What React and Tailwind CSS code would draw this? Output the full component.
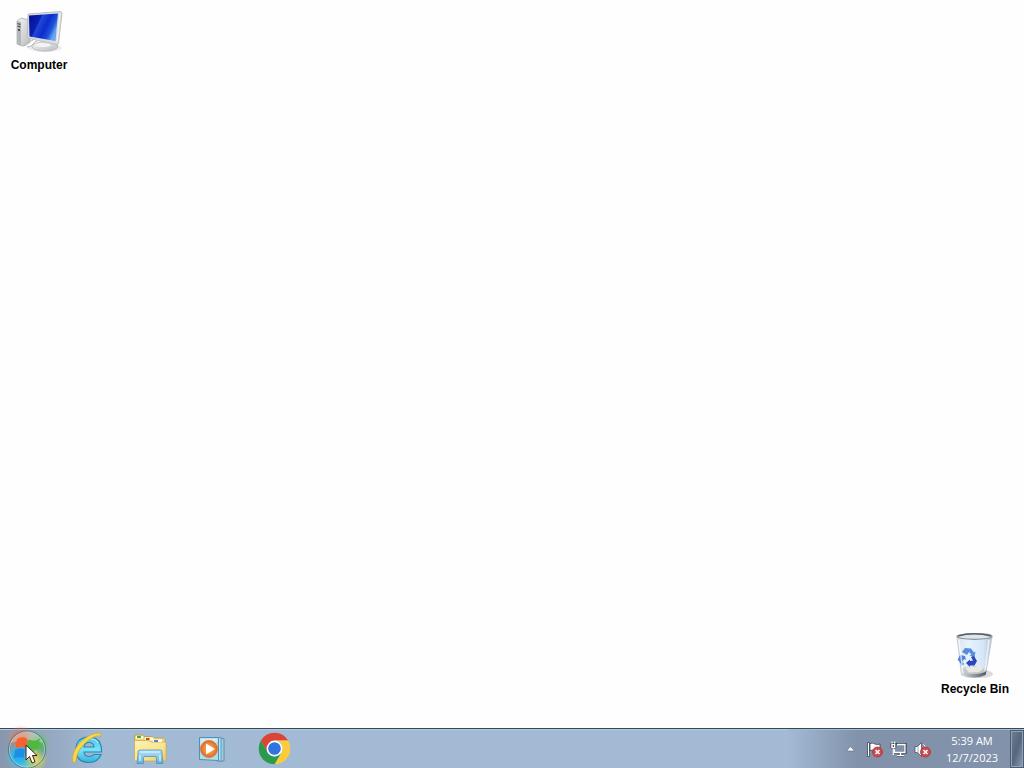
import React from "react";

function ComputerIcon() {
  return (
    <svg width="48" height="44" viewBox="0 0 48 44" aria-hidden="true">
      <defs>
        <linearGradient id="screen" x1="0" y1="0" x2="1" y2="0.45">
          <stop offset="0" stopColor="#060f8c" />
          <stop offset="0.38" stopColor="#0a1fb4" />
          <stop offset="0.42" stopColor="#2348d8" />
          <stop offset="0.65" stopColor="#0c2ccc" />
          <stop offset="0.85" stopColor="#1d50dc" />
          <stop offset="1" stopColor="#6aa4f0" />
        </linearGradient>
        <linearGradient id="metal" x1="0" y1="0" x2="1" y2="1">
          <stop offset="0" stopColor="#f5f5f5" />
          <stop offset="1" stopColor="#b9bcbd" />
        </linearGradient>
      </defs>
      <ellipse cx="30" cy="38" rx="17" ry="4" fill="#e2e2e2" opacity="0.6" />
      <path d="M2 11 6 8l9 2v22l-8 4-5-2Z" fill="url(#metal)" stroke="#b0b3b4" strokeWidth="0.8" />
      <path d="m2 11 4 1v24l-4-2Z" fill="#b4b7b8" />
      <path d="M2.500 13.500l3 1M2.500 16l3 1" stroke="#484d52" strokeWidth="1.200" />
      <circle cx="4" cy="20" r="1.100" fill="#303a44" />
      <path d="M8 36c6-1 6-5 10-6M12 37c6 0 6-5 10-6" fill="none" stroke="#a0a0a0" strokeWidth="0.8" />
      <path d="m27 29 9 2-1 6-7-1Z" fill="#b6bbbe" />
      <ellipse cx="30" cy="36.500" rx="13" ry="4.700" fill="url(#metal)" stroke="#b4b8ba" strokeWidth="0.800" />
      <ellipse cx="28" cy="35" rx="8" ry="2" fill="#f1f3f4" />
      <path d="m13 4 32-2.500q2 0 2 2L43.500 33q-.3 2-2 1.500L14 28.500q-1.500 0-1.500-2Z" fill="#dadddf" stroke="#b0b5b8" strokeWidth="0.8" />
      <path d="m14 5.500 29-2L40.500 31 14.500 26.500Z" fill="url(#screen)" />
      <path d="m45 3.500-3 29" stroke="#f6f6f6" />
    </svg>
  );
}

function RecycleBinIcon() {
  return (
    <svg width="42" height="48" viewBox="0 0 42 48" aria-hidden="true">
      <defs>
        <linearGradient id="bin">
          <stop offset="0" stopColor="#dbe3ea" />
          <stop offset="0.35" stopColor="#e6f3ff" />
          <stop offset="0.75" stopColor="#d4e6f7" />
          <stop offset="1" stopColor="#b6c3d0" />
        </linearGradient>
        <linearGradient id="binBase">
          <stop offset="0" stopColor="#d9dedf" />
          <stop offset="0.5" stopColor="#939b9e" />
          <stop offset="1" stopColor="#52595d" />
        </linearGradient>
      </defs>
      <ellipse cx="28" cy="42" rx="11" ry="4" fill="#dcdcdc" />
      <path d="m3 5 4.500 38q13 5 24 0L38 5Z" fill="url(#bin)" stroke="#bcc4cb" strokeWidth="0.8" />
      <path d="m7 38 .6 5q12 5 24 0l.9-5q-11 4-25.500 0Z" fill="url(#binBase)" />
      <ellipse cx="20" cy="38" rx="12.500" ry="4" fill="#c2c8cb" />
      <path d="m11 36 5-2 5 1 4-2 5 3-5 4-10 .5Z" fill="#e8e9e4" />
      <ellipse cx="20.500" cy="4.500" rx="17.500" ry="2.800" fill="#dfe6eb" stroke="#8b939b" strokeWidth="1.200" />
      <path d="M4 4q16-4.500 33 0" fill="none" stroke="#59626d" strokeWidth="1.300" />
      <g transform="translate(-1 0)">
        <path d="m9 20 3-4 6 .5 3 4 1.500-1-1 6-5-2 2-1-2.500-2.500-2 3Z" fill="#5b8cdc" />
        <path d="m7 23 5 1 1 4-1.500-1L9 29.500l2 2.500-2 2-3-5-1.500-1Z" fill="#4d83d8" />
        <path d="m18 25 3-1 3 5-2.500 4.500H17V35l-4-4 4-3.500V29l3-.5Z" fill="#2b46b8" />
      </g>
      <path d="m5 8 4 33M35 8l-4 31" stroke="#fff" strokeWidth="1.500" opacity="0.7" />
    </svg>
  );
}

function StartIcon() {
  return (
    <svg width="40" height="39" viewBox="0 0 40 39" className="overflow-visible" aria-hidden="true">
      <defs>
        <linearGradient id="orb" x1="0" y1="0" x2="0" y2="1">
          <stop offset="0" stopColor="#a3adb0" />
          <stop offset="0.45" stopColor="#6f8d92" />
          <stop offset="0.75" stopColor="#4fa3b4" />
          <stop offset="1" stopColor="#6fd0d8" />
        </linearGradient>
        <radialGradient id="glowRed">
          <stop offset="0" stopColor="#ff5a30" />
          <stop offset="0.45" stopColor="#f06848" stopOpacity="0.8" />
          <stop offset="1" stopColor="#e88870" stopOpacity="0" />
        </radialGradient>
        <radialGradient id="glowGreen">
          <stop offset="0" stopColor="#3fc040" />
          <stop offset="0.5" stopColor="#5cc064" stopOpacity="0.8" />
          <stop offset="1" stopColor="#7cc490" stopOpacity="0" />
        </radialGradient>
        <radialGradient id="glowBlue">
          <stop offset="0" stopColor="#18a4f4" />
          <stop offset="0.5" stopColor="#30b8f0" stopOpacity="0.85" />
          <stop offset="1" stopColor="#60c8e8" stopOpacity="0" />
        </radialGradient>
        <radialGradient id="glowYellow">
          <stop offset="0" stopColor="#f4d860" />
          <stop offset="0.5" stopColor="#c8cc60" stopOpacity="0.75" />
          <stop offset="1" stopColor="#b0c880" stopOpacity="0" />
        </radialGradient>
      </defs>
      <circle cx="20" cy="19.500" r="18.500" fill="url(#orb)" />
      <circle cx="14" cy="10" r="15" fill="url(#glowRed)" opacity="0.75" />
      <circle cx="31" cy="14" r="13" fill="url(#glowGreen)" opacity="0.85" />
      <circle cx="12" cy="26" r="14" fill="url(#glowBlue)" />
      <circle cx="29" cy="30" r="12" fill="url(#glowYellow)" />
      <path d="M4 13C8 0 31-2 36 13q-16-6-32 0Z" fill="#e6e4d8" opacity="0.4" />
      <path d="M10 9q5-3 10-.5L18.500 18q-5-2.500-10 .5Z" fill="#f8602c" />
      <path d="M21.500 9.500q6 3.500 12-1.500-2 4-3 10-5 3-10.500 0Z" fill="#50b83c" />
      <path d="M8 20q5-3 10-.5L16.500 28q-5-2-9.500.5Z" fill="#1c8ee4" />
      <path d="M19.500 20.500q5 3 10.500 0l-2 9q-5 2-10-1Z" fill="#ecc850" />
      <circle cx="20" cy="19.500" r="18.500" fill="none" stroke="#4e6c76" strokeWidth="0.8" />
      <circle cx="20" cy="19.500" r="17.600" fill="none" stroke="#cfe4de" strokeWidth="0.8" opacity="0.7" />
    </svg>
  );
}

function ExplorerEIcon() {
  return (
    <svg width="34" height="34" viewBox="0 0 34 34" aria-hidden="true">
      <defs>
        <linearGradient id="eBlue" x1="0" y1="0" x2="0" y2="1">
          <stop offset="0" stopColor="#4fbfe6" />
          <stop offset="0.5" stopColor="#7ce2f6" />
          <stop offset="1" stopColor="#35aedb" />
        </linearGradient>
      </defs>
      <path d="M30.500 20H13q.5 4.500 5 4.500 3.500 0 5-2h7q-3 8-12 8-13 0-13-13 0-12 13-12.500 13 0 12.500 15ZM13 15h10q-.5-4.500-5-4.500T13 15Z" fill="url(#eBlue)" stroke="#2489b4" strokeWidth="1.200" fillRule="evenodd" />
      <path d="M8 14q3-7 11-7 6 0 8 4" fill="none" stroke="#a8ecf8" strokeWidth="1.200" />
      <path d="M2 30C-1 18 14 2 27 1q4 0 2.500 4-1-2-4-1C16 7 7 17 5.500 26q-.5 2-1 4-1.500 1.500-2.500 0Z" fill="#f6d84a" stroke="#cfa42c" strokeWidth="0.700" />
    </svg>
  );
}

function FolderIcon() {
  return (
    <svg width="34" height="32" viewBox="0 0 34 32" aria-hidden="true">
      <defs>
        <linearGradient id="folder" x1="0" y1="0" x2="1" y2="1">
          <stop offset="0" stopColor="#fff3b4" />
          <stop offset="0.6" stopColor="#f7e490" />
          <stop offset="1" stopColor="#ecca62" />
        </linearGradient>
        <linearGradient id="stand" x1="0" y1="0" x2="0" y2="1">
          <stop offset="0" stopColor="#b4e0f4" />
          <stop offset="0.5" stopColor="#8ccaec" />
          <stop offset="1" stopColor="#62aedc" />
        </linearGradient>
      </defs>
      <path d="M1.500 4q0-2 2-2h6l1.500 1.500h9L21.500 5H31q1 0 1 1v21H1.500Z" fill="#f0d880" stroke="#c09c44" strokeWidth="0.8" />
      <path d="M3 3h7v2.500H3ZM12 4.500h8v3h-8Z" fill="#fffdf0" />
      <path d="M4 3h4v2H4Z" fill="#46ac38" />
      <path d="M13 5h3.500v2H13Z" fill="#c44a2c" />
      <path d="M1.500 7.500H15l3.500 1.500H32q1 0 1 1v17q0 1-1 1H2.500q-1 0-1-1Z" fill="url(#folder)" stroke="#ceac54" strokeWidth="0.8" />
      <path d="M20 6.500h9V9h-9Z" fill="#fff" />
      <path d="M21 7h4v2h-4Z" fill="#4c88c8" />
      <path d="M5 19q0-2 2-2h20q2 0 2 2v2l1 9.500h-6.500V25q0-1.500-1.500-1.500H12q-1.500 0-1.500 1.500v5.500H4L5 21Z" fill="url(#stand)" stroke="#4c94bc" strokeWidth="0.8" />
      <path d="M7 19h20M7 22v6M27 22v6" fill="none" stroke="#e2f8ff" strokeWidth="1.200" />
    </svg>
  );
}

function MediaIcon() {
  return (
    <svg width="28" height="28" viewBox="0 0 28 28" aria-hidden="true">
      <defs>
        <radialGradient id="play">
          <stop offset="0" stopColor="#ffb45c" />
          <stop offset="0.65" stopColor="#f0863a" />
          <stop offset="1" stopColor="#de6a24" />
        </radialGradient>
      </defs>
      <path d="M20 3.500h6V26h-6Z" fill="#9ecbe0" stroke="#4a8cac" strokeWidth="0.8" />
      <path d="M19 2.500h4V26h-4Z" fill="#bfe0ee" stroke="#4a8cac" strokeWidth="0.8" />
      <path d="M1.500 2.500h19v23l-19-1Z" fill="#b4daea" stroke="#4a93b2" />
      <path d="M2.500 3.500h17v3l-17 9Z" fill="#d6ecf4" />
      <circle cx="11" cy="14" r="8.500" fill="url(#play)" stroke="#cc6c2c" strokeWidth="0.7" />
      <path d="m8 8.500 9 5.500-9 5.500Z" fill="#fff" />
    </svg>
  );
}

function ChromeIcon() {
  return (
    <svg width="33" height="33" viewBox="0 0 48 48" aria-hidden="true">
      <path d="M24 1A23 23 0 0 1 43.900 12.500H24L14 29.800 4.100 12.500A23 23 0 0 1 24 1Z" fill="#dc4437" />
      <path d="M43.900 12.500A23 23 0 0 1 24 47l10-17.200a11.500 11.500 0 0 0-10-17.300Z" fill="#fbcb3c" />
      <path d="M24 47A23 23 0 0 1 4.100 12.500L14 29.800A11.500 11.500 0 0 0 34 29.800Z" fill="#2a9a4e" />
      <circle cx="24" cy="24" r="11.500" fill="#fff" />
      <circle cx="24" cy="24" r="9.200" fill="#2f74e0" />
    </svg>
  );
}

function ErrorBadge() {
  return (
    <g>
      <circle cx="11.500" cy="11" r="5" fill="#d04848" stroke="#a7393f" strokeWidth="0.8" />
      <path d="m9.500 9 4 4m0-4-4 4" stroke="#fff" strokeWidth="1.600" />
    </g>
  );
}

function FlagIcon() {
  return (
    <svg width="17" height="17" viewBox="0 0 17 17" aria-hidden="true">
      <path d="M1.500 1.500h2v14h-2ZM4 2.500q3-1 5 .5 2 1 5 0v7H9q-2-1.500-5-.5Z" fill="#fff" stroke="#384354" strokeWidth="0.8" />
      <ErrorBadge />
    </svg>
  );
}

function NetworkIcon() {
  return (
    <svg width="17" height="17" viewBox="0 0 17 17" aria-hidden="true">
      <path d="M6 3.500h9v8H4.500V8M7 14.500h7M10.500 12v2" fill="none" stroke="#2f3b4c" strokeWidth="3.200" />
      <path d="M5.500 3.500H15v8H5Z" fill="#7f90a6" />
      <path d="M7 3.500h8v8H4.500V8M10.500 12v2M7 14.500h7" fill="none" stroke="#fff" strokeWidth="1.300" />
      <path d="M.8 2.500h5v4L4.300 8H2.300L.8 6.500Z" fill="#fff" stroke="#2f3b4c" strokeWidth="0.8" />
      <path d="M2 .5v2M4.600.5v2M3.300 8v6" stroke="#fff" strokeWidth="1.200" />
      <path d="M3.300 4v2" stroke="#2f3b4c" />
    </svg>
  );
}

function SpeakerIcon() {
  return (
    <svg width="17" height="17" viewBox="0 0 17 17" aria-hidden="true">
      <path d="M1 5.500h2.500l4-4v14l-4-4H1Z" fill="#fff" stroke="#47566a" strokeWidth="0.8" />
      <path d="M4 5v7" stroke="#8a99ac" strokeWidth="0.8" />
      <path d="M9.500 3.500q2 1.500 2 4" fill="none" stroke="#fff" />
      <ErrorBadge />
    </svg>
  );
}

function DesktopItem({ label, children, className }) {
  return (
    <button className={`flex w-[76px] flex-col items-center gap-px text-[12px] leading-4 font-bold text-black ${className}`}>
      <span className="flex h-12 items-center justify-center">{children}</span>
      <span className="whitespace-nowrap">{label}</span>
    </button>
  );
}

const pinned = [
  { name: "Internet Explorer", Icon: ExplorerEIcon },
  { name: "Windows Explorer", Icon: FolderIcon },
  { name: "Windows Media Player", Icon: MediaIcon },
  { name: "Google Chrome", Icon: ChromeIcon },
];

const tray = [
  { name: "Action Center", Icon: FlagIcon },
  { name: "Network", Icon: NetworkIcon },
  { name: "Volume", Icon: SpeakerIcon },
];

export default function App() {
  return (
    <div className="flex min-h-screen flex-col bg-[#fefefe] font-['Liberation_Sans',sans-serif]">
      <main className="flex flex-1 justify-between px-px pt-2 pb-[31px]">
        <DesktopItem label="Computer" className="self-start">
          <ComputerIcon />
        </DesktopItem>
        <DesktopItem label="Recycle Bin" className="mr-[10px] self-end">
          <RecycleBinIcon />
        </DesktopItem>
      </main>

      <footer className="flex h-10 items-stretch border-t border-[#34495a] bg-linear-to-r from-[#8797ad] via-[#a3bad5] via-10% to-[#a3bad5]">
        <div className="flex min-w-0 flex-1 border-t border-[#bacbdd]">
          <button aria-label="Start" className="relative flex w-[57px] items-center pl-[7px]">
            <StartIcon />
            <svg className="absolute top-[14px] left-[25px]" width="14" height="21" viewBox="0 0 14 21" aria-hidden="true">
              <path d="M1 1v15l3.500-3.500L7 19l3-1.300L7.500 11.500H12Z" fill="#fff" stroke="#222" strokeWidth="1" />
            </svg>
          </button>
          <nav aria-label="Pinned programs" className="flex pb-px">
            {pinned.map(({ name, Icon }) => (
              <button key={name} aria-label={name} className="flex w-[62px] items-center justify-center">
                <Icon />
              </button>
            ))}
          </nav>
        </div>
        <div className="flex items-stretch border-t border-[#aabdd1] bg-linear-to-r from-[#a3bad5] to-[#8192aa] to-30% pl-[54px]">
          <button aria-label="Show hidden icons" className="flex w-4 items-center justify-center">
            <svg width="9" height="6" viewBox="0 0 9 6" aria-hidden="true">
              <path d="m.5 5 4-4.500 4 4.500Z" fill="#fff" stroke="#56677d" strokeWidth="0.6" />
            </svg>
          </button>
          <div className="flex pl-1">
            {tray.map(({ name, Icon }) => (
              <button key={name} aria-label={name} className="flex w-6 items-center justify-center">
                <Icon />
              </button>
            ))}
          </div>
          <button className="flex w-[76px] flex-col items-center justify-center font-['Open_Sans',sans-serif] text-[11px] leading-[17px] text-white">
            <span>5:39 AM</span>
            <span>12/7/2023</span>
          </button>
          <button
            aria-label="Show desktop"
            className="w-[14px] border border-[#4d5d70] bg-linear-to-br from-[#6e7f94] via-[#56677b] to-[#8fa1b8] shadow-[inset_0_0_0_1px_#91a2b7]"
          />
        </div>
      </footer>
    </div>
  );
}
